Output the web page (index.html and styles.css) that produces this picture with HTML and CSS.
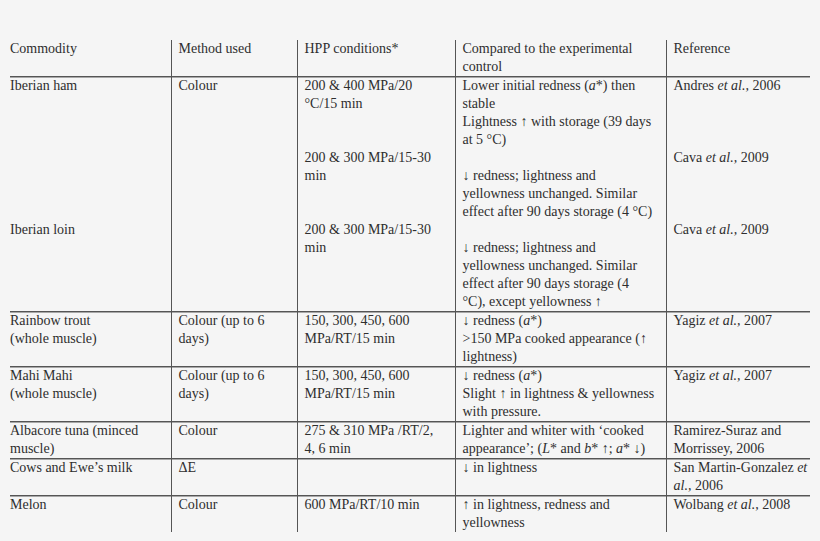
FILE: index.html
```html
<!DOCTYPE html>
<html>
<head>
<meta charset="utf-8">
<link rel="stylesheet" href="styles.css">
</head>
<body>
<table class="data">
  <colgroup>
    <col class="c1"><col class="c2"><col class="c3"><col class="c4"><col class="c5">
  </colgroup>
  <tr class="head">
    <td>Commodity</td>
    <td>Method used</td>
    <td>HPP conditions*</td>
    <td>Compared to the experimental<br>control</td>
    <td>Reference</td>
  </tr>
  <tr class="row">
    <td>Iberian ham</td>
    <td>Colour</td>
    <td>200 &amp; 400 MPa/20<br>°C/15 min</td>
    <td>Lower initial redness (<i>a</i>*) then<br>stable<br>Lightness ↑ with storage (39 days<br>at 5 °C)</td>
    <td>Andres <i>et al.,</i> 2006</td>
  </tr>
  <tr class="sub">
    <td></td>
    <td></td>
    <td>200 &amp; 300 MPa/15-30<br>min</td>
    <td>&nbsp;<br>↓ redness; lightness and<br>yellowness unchanged. Similar<br>effect after 90 days storage (4 °C)</td>
    <td>Cava <i>et al.,</i> 2009</td>
  </tr>
  <tr class="sub">
    <td>Iberian loin</td>
    <td></td>
    <td>200 &amp; 300 MPa/15-30<br>min</td>
    <td>&nbsp;<br>↓ redness; lightness and<br>yellowness unchanged. Similar<br>effect after 90 days storage (4<br>°C), except yellowness ↑</td>
    <td>Cava <i>et al.,</i> 2009</td>
  </tr>
  <tr class="row">
    <td>Rainbow trout<br>(whole muscle)</td>
    <td>Colour (up to 6<br>days)</td>
    <td>150, 300, 450, 600<br>MPa/RT/15 min</td>
    <td>↓ redness (<i>a</i>*)<br>&gt;150 MPa cooked appearance (↑<br>lightness)</td>
    <td>Yagiz <i>et al.,</i> 2007</td>
  </tr>
  <tr class="row">
    <td>Mahi Mahi<br>(whole muscle)</td>
    <td>Colour (up to 6<br>days)</td>
    <td>150, 300, 450, 600<br>MPa/RT/15 min</td>
    <td>↓ redness (<i>a</i>*)<br>Slight ↑ in lightness &amp; yellowness<br>with pressure.</td>
    <td>Yagiz <i>et al.,</i> 2007</td>
  </tr>
  <tr class="row">
    <td>Albacore tuna (minced<br>muscle)</td>
    <td>Colour</td>
    <td>275 &amp; 310 MPa /RT/2,<br>4, 6 min</td>
    <td>Lighter and whiter with ‘cooked<br>appearance’; (<i>L</i>* and <i>b</i>* ↑; <i>a</i>* ↓)</td>
    <td>Ramirez-Suraz and<br>Morrissey, 2006</td>
  </tr>
  <tr class="row">
    <td>Cows and Ewe’s milk</td>
    <td>ΔE</td>
    <td></td>
    <td>↓ in lightness</td>
    <td>San Martin-Gonzalez <i>et</i><br><i>al.,</i> 2006</td>
  </tr>
  <tr class="row last">
    <td>Melon</td>
    <td>Colour</td>
    <td>600 MPa/RT/10 min</td>
    <td>↑ in lightness, redness and<br>yellowness</td>
    <td>Wolbang <i>et al.,</i> 2008</td>
  </tr>
</table>
</body>
</html>
```
FILE: styles.css
```css
html, body {
  margin: 0;
  padding: 0;
  background: #f5f5f5;
}
body {
  padding: 40px 0 0 10px;
  font-family: "Liberation Serif", "Times New Roman", "DejaVu Serif", serif;
  font-size: 14px;
  line-height: 18px;
  color: #2e2e2e;
}
.data {
  border-collapse: collapse;
  table-layout: fixed;
  width: 800px;
}
.c1 { width: 161px; }
.c2 { width: 126px; }
.c3 { width: 158px; }
.c4 { width: 211px; }
.c5 { width: 144px; }
.data td {
  vertical-align: top;
  padding: 0 0 0 7px;
  white-space: nowrap;
  overflow: visible;
  border-left: 1px solid #555;
}
.data td:first-child {
  padding-left: 0;
  border-left: none;
}
.row td {
  border-top: 1px solid #555;
  box-shadow: inset 0 1px 0 #a8a8a8;
}
.last td {
  height: 33px;
}
```
